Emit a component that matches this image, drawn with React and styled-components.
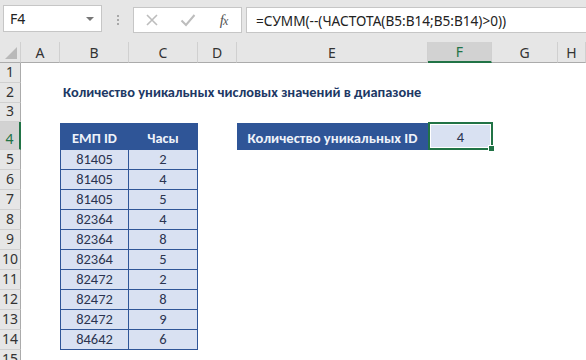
import React from 'react';
import styled, {createGlobalStyle} from 'styled-components';

const GlobalStyle = createGlobalStyle`
    html, body {
        margin: 0;
        padding: 0;
        background: #ffffff;
    }
    body {
        width: 586px;
        height: 360px;
        overflow: hidden;
    }
`;

const rows = [
    ['81405', '2'],
    ['81405', '4'],
    ['81405', '5'],
    ['82364', '4'],
    ['82364', '8'],
    ['82364', '5'],
    ['82472', '2'],
    ['82472', '8'],
    ['82472', '9'],
    ['84642', '6'],
];

const columns = ['A', 'B', 'C', 'D', 'E', 'F', 'G', 'H'];

function App() {
    return (
        <>
            <GlobalStyle />
            <Window>
                <FormulaBar>
                    <NameBox>
                        F4
                        <Caret />
                    </NameBox>
                    <Grip>
                        <span />
                        <span />
                        <span />
                    </Grip>
                    <FxBox>
                        <FxButton>
                            <svg width="14" height="14" viewBox="0 0 14 14">
                                <path d="M2 2 L12 12 M12 2 L2 12" stroke="#bdbdbd" strokeWidth="1.6" fill="none" />
                            </svg>
                        </FxButton>
                        <FxButton>
                            <svg width="16" height="14" viewBox="0 0 16 14">
                                <path d="M1.5 7.5 L6 12 L14.5 2" stroke="#bdbdbd" strokeWidth="2" fill="none" />
                            </svg>
                        </FxButton>
                        <FxLabel><i>f</i><i>x</i></FxLabel>
                    </FxBox>
                    <FormulaInput>=СУММ(--(ЧАСТОТА(B5:B14;B5:B14)&gt;0))</FormulaInput>
                </FormulaBar>

                <Sheet>
                    <Corner />
                    {columns.map((c) => (
                        <ColHead key={c} $active={c === 'F'}>{c}</ColHead>
                    ))}

                    <RowHead>1</RowHead>
                    <Blank style={{gridColumn: '2 / -1'}} />

                    <RowHead>2</RowHead>
                    <Blank />
                    <Title>Количество уникальных числовых значений в диапазоне</Title>

                    <RowHead>3</RowHead>
                    <Blank style={{gridColumn: '2 / -1'}} />

                    <RowHead $active>4</RowHead>
                    <Blank />
                    <HeadCell $first>ЕМП ID</HeadCell>
                    <HeadCell>Часы</HeadCell>
                    <Blank />
                    <LabelCell>Количество уникальных ID</LabelCell>
                    <ResultCell>
                        <ResultInner>4</ResultInner>
                        <Handle />
                    </ResultCell>
                    <Blank style={{gridColumn: '8 / -1'}} />

                    {rows.map(([id, hours], i) => (
                        <React.Fragment key={i}>
                            <RowHead>{i + 5}</RowHead>
                            <Blank />
                            <DataCell $first>{id}</DataCell>
                            <DataCell>{hours}</DataCell>
                            <Blank style={{gridColumn: '5 / -1'}} />
                        </React.Fragment>
                    ))}

                    <RowHead>15</RowHead>
                    <Blank style={{gridColumn: '2 / -1'}} />
                </Sheet>
            </Window>
        </>
    );
}

export default App;

const Window = styled.div`
    width: 586px;
    height: 360px;
    display: flex;
    flex-direction: column;
    overflow: hidden;
    font-family: 'Carlito', 'Lato', 'Noto Sans', sans-serif;
`;

const FormulaBar = styled.div`
    flex-shrink: 0;
    height: 42px;
    background: #e6e6e6;
    display: flex;
    align-items: flex-start;
    padding: 5px 0 0 3px;
    box-sizing: border-box;
    font-family: 'Noto Sans', 'Open Sans', sans-serif;
`;

const NameBox = styled.div`
    position: relative;
    width: 99px;
    height: 27px;
    box-sizing: border-box;
    background: #ffffff;
    border: 1px solid #c6c6c6;
    display: flex;
    align-items: center;
    padding-left: 6px;
    font-size: 14px;
    color: #222222;
`;

const Caret = styled.span`
    position: absolute;
    right: 7px;
    top: 11px;
    border-left: 4px solid transparent;
    border-right: 4px solid transparent;
    border-top: 4px solid #777777;
`;

const Grip = styled.div`
    width: 31px;
    display: flex;
    flex-direction: column;
    align-items: center;
    gap: 2px;
    padding-top: 10px;

    span {
        width: 2px;
        height: 2px;
        background: #a8a8a8;
    }
`;

const FxBox = styled.div`
    width: 109px;
    height: 26px;
    margin-top: 2px;
    box-sizing: border-box;
    background: #ffffff;
    border: 1px solid #c6c6c6;
    display: grid;
    grid-template-columns: 36px 36px 1fr;
    align-items: center;
    justify-items: center;
`;

const FxButton = styled.div`
    display: flex;
    align-items: center;
    justify-content: center;
`;

const FxLabel = styled.div`
    font-family: 'Liberation Serif', serif;
    font-size: 15px;
    color: #555555;
    letter-spacing: -1px;

    i:last-child {
        font-size: 12px;
    }
`;

const FormulaInput = styled.div`
    flex: 1;
    height: 26px;
    margin: 2px 0 0 4px;
    box-sizing: border-box;
    background: #ffffff;
    border: 1px solid #c6c6c6;
    border-right: none;
    display: flex;
    align-items: center;
    padding-left: 9px;
    font-size: 13.6px;
    color: #222222;
    white-space: nowrap;
`;

const Sheet = styled.div`
    flex: 1;
    min-height: 0;
    overflow: hidden;
    display: grid;
    grid-template-columns: 21px 39px 69px 69px 39px 191px 64px 66px 1fr;
    grid-template-rows: 21px 20px 20px 19px 28px repeat(10, 20px) 20px;
    background: #ffffff;
`;

const Corner = styled.div`
    background: #e6e6e6;
    border-right: 1px solid #d0d0d0;
    border-bottom: 1px solid #ababab;
    box-sizing: border-box;
    position: relative;

    &::after {
        content: '';
        position: absolute;
        right: 3px;
        bottom: 3px;
        border-left: 12px solid transparent;
        border-bottom: 12px solid #b9b9b9;
    }
`;

const ColHead = styled.div`
    background: ${(p) => (p.$active ? '#d2d2d2' : '#e6e6e6')};
    color: ${(p) => (p.$active ? '#217346' : '#333333')};
    border-right: 1px solid #d0d0d0;
    border-bottom: ${(p) => (p.$active ? '2px solid #217346' : '1px solid #ababab')};
    box-sizing: border-box;
    display: flex;
    align-items: center;
    justify-content: center;
    font-family: 'Noto Sans', sans-serif;
    font-size: 14px;
`;

const RowHead = styled.div`
    background: ${(p) => (p.$active ? '#d2d2d2' : '#e6e6e6')};
    color: ${(p) => (p.$active ? '#217346' : '#333333')};
    border-right: ${(p) => (p.$active ? '2px solid #217346' : '1px solid #ababab')};
    border-bottom: 1px solid #d0d0d0;
    box-sizing: border-box;
    display: flex;
    align-items: flex-end;
    justify-content: center;
    padding-bottom: 1px;
    font-family: 'Noto Sans', sans-serif;
    font-size: 14px;
`;

const Blank = styled.div``;

const Title = styled.div`
    grid-column: 3 / -1;
    display: flex;
    align-items: flex-end;
    padding: 0 0 2px 3px;
    font-size: 14.4px;
    font-weight: 700;
    color: #203864;
    white-space: nowrap;
    overflow: hidden;
`;

const HeadCell = styled.div`
    background: #2f5597;
    color: #eef2fa;
    font-size: 14.4px;
    font-weight: 700;
    display: flex;
    align-items: center;
    justify-content: center;
    padding-top: 2px;
    box-sizing: border-box;
    border-right: 1px solid #2f5597;
    border-left: ${(p) => (p.$first ? '1px solid #2f5597' : 'none')};
    margin-top: 1px;
`;

const DataCell = styled.div`
    background: #d9e1f2;
    color: #2b3450;
    font-size: 14.5px;
    display: flex;
    align-items: flex-end;
    justify-content: center;
    padding-bottom: 1px;
    box-sizing: border-box;
    border-right: 1px solid #2f5597;
    border-bottom: 1px solid #2f5597;
    border-left: ${(p) => (p.$first ? '1px solid #2f5597' : 'none')};
`;

const LabelCell = styled.div`
    background: #2f5597;
    color: #eef2fa;
    font-size: 14.6px;
    font-weight: 700;
    display: flex;
    align-items: center;
    justify-content: center;
    padding-top: 2px;
    margin-top: 1px;
`;

const ResultCell = styled.div`
    position: relative;
    border: 2px solid #217346;
    margin: 0 -1px 0 0;
    padding: 1px;
    box-sizing: border-box;
    display: flex;
`;

const ResultInner = styled.div`
    flex: 1;
    background: #d9e1f2;
    color: #2b3450;
    font-size: 14.5px;
    display: flex;
    align-items: center;
    justify-content: center;
    padding-top: 1px;
`;

const Handle = styled.div`
    position: absolute;
    right: -4px;
    bottom: -4px;
    width: 5px;
    height: 5px;
    background: #217346;
    border: 1px solid #ffffff;
`;
